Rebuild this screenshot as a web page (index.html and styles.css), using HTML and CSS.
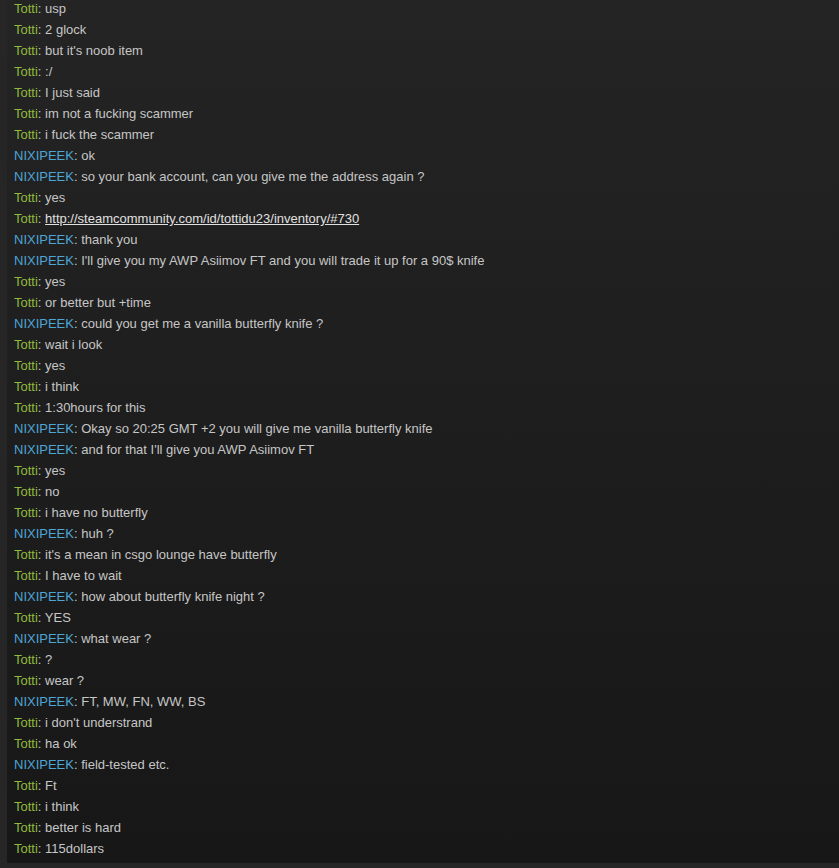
FILE: index.html
```html
<!DOCTYPE html>
<html lang="en">
<head>
    <meta charset="UTF-8">
    <title>Chat</title>
    <link rel="stylesheet" href="styles.css">
</head>
<body>
    <div class="chat-window">
        <div class="chat-log">
            <div class="line"><span class="me">Totti</span>: usp</div>
            <div class="line"><span class="me">Totti</span>: 2 glock</div>
            <div class="line"><span class="me">Totti</span>: but it's noob item</div>
            <div class="line"><span class="me">Totti</span>: :/</div>
            <div class="line"><span class="me">Totti</span>: I just said</div>
            <div class="line"><span class="me">Totti</span>: im not a fucking scammer</div>
            <div class="line"><span class="me">Totti</span>: i fuck the scammer</div>
            <div class="line"><span class="them">NIXIPEEK</span>: ok</div>
            <div class="line"><span class="them">NIXIPEEK</span>: so your bank account, can you give me the address again ?</div>
            <div class="line"><span class="me">Totti</span>: yes</div>
            <div class="line"><span class="me">Totti</span>: <a href="#">http://steamcommunity.com/id/tottidu23/inventory/#730</a></div>
            <div class="line"><span class="them">NIXIPEEK</span>: thank you</div>
            <div class="line"><span class="them">NIXIPEEK</span>: I'll give you my AWP Asiimov FT and you will trade it up for a 90$ knife</div>
            <div class="line"><span class="me">Totti</span>: yes</div>
            <div class="line"><span class="me">Totti</span>: or better but +time</div>
            <div class="line"><span class="them">NIXIPEEK</span>: could you get me a vanilla butterfly knife ?</div>
            <div class="line"><span class="me">Totti</span>: wait i look</div>
            <div class="line"><span class="me">Totti</span>: yes</div>
            <div class="line"><span class="me">Totti</span>: i think</div>
            <div class="line"><span class="me">Totti</span>: 1:30hours for this</div>
            <div class="line"><span class="them">NIXIPEEK</span>: Okay so 20:25 GMT +2 you will give me vanilla butterfly knife</div>
            <div class="line"><span class="them">NIXIPEEK</span>: and for that I'll give you AWP Asiimov FT</div>
            <div class="line"><span class="me">Totti</span>: yes</div>
            <div class="line"><span class="me">Totti</span>: no</div>
            <div class="line"><span class="me">Totti</span>: i have no butterfly</div>
            <div class="line"><span class="them">NIXIPEEK</span>: huh ?</div>
            <div class="line"><span class="me">Totti</span>: it's a mean in csgo lounge have butterfly</div>
            <div class="line"><span class="me">Totti</span>: I have to wait</div>
            <div class="line"><span class="them">NIXIPEEK</span>: how about butterfly knife night ?</div>
            <div class="line"><span class="me">Totti</span>: YES</div>
            <div class="line"><span class="them">NIXIPEEK</span>: what wear ?</div>
            <div class="line"><span class="me">Totti</span>: ?</div>
            <div class="line"><span class="me">Totti</span>: wear ?</div>
            <div class="line"><span class="them">NIXIPEEK</span>: FT, MW, FN, WW, BS</div>
            <div class="line"><span class="me">Totti</span>: i don't understrand</div>
            <div class="line"><span class="me">Totti</span>: ha ok</div>
            <div class="line"><span class="them">NIXIPEEK</span>: field-tested etc.</div>
            <div class="line"><span class="me">Totti</span>: Ft</div>
            <div class="line"><span class="me">Totti</span>: i think</div>
            <div class="line"><span class="me">Totti</span>: better is hard</div>
            <div class="line"><span class="me">Totti</span>: 115dollars</div>
        </div>
    </div>
</body>
</html>
```

FILE: styles.css
```css
body {
    margin: 0;
    background: #262626;
    font-family: 'Liberation Sans', Arial, sans-serif;
    height: 868px;
    overflow: hidden;
}

.chat-window {
    margin-left: 7px;
    height: 863px;
    overflow: hidden;
    background: linear-gradient(to bottom, #242424, #171717);
}

.chat-log {
    margin-top: -2px;
    padding-left: 7px;
}

.line {
    font-size: 13px;
    line-height: 21px;
    color: #c6c6c6;
    white-space: nowrap;
}

.me {
    color: #90ba3c;
}

.them {
    color: #4ea5d6;
}

.line a {
    color: #e0e0e0;
    text-decoration: underline;
}
```
